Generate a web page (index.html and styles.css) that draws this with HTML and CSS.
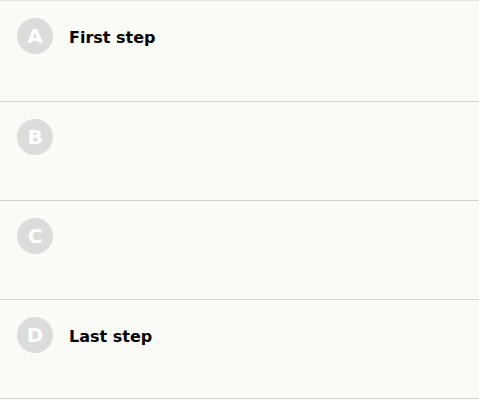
FILE: index.html
```html
<!DOCTYPE html>
<html lang="en">
<head>
  <meta charset="UTF-8" />
  <title>Steps</title>
  <link rel="stylesheet" href="styles.css">
</head>
<body>

<ul class="steps">
  <li class="step step--first">
    <span class="badge">A</span>
    <span class="label">First step</span>
  </li>
  <li class="step">
    <span class="badge">B</span>
    <span class="label"></span>
  </li>
  <li class="step">
    <span class="badge">C</span>
    <span class="label"></span>
  </li>
  <li class="step">
    <span class="badge">D</span>
    <span class="label">Last step</span>
  </li>
</ul>

</body>
</html>
```

FILE: styles.css
```css
body {
  margin: 0;
  background: #fafaf6;
  font-family: "DejaVu Sans", Verdana, sans-serif;
  color: #000;
}
.steps {
  list-style: none;
  margin: 0;
  padding: 0;
  border-top: 1px solid #e6e6e2;
}
.step {
  display: flex;
  align-items: flex-start;
  gap: 16px;
  height: 99px;
  padding: 17px 17px 0 17px;
  box-sizing: border-box;
  border-bottom: 1px solid #d3d3cf;
}
.step--first {
  height: 101px;
}
.badge {
  flex: none;
  width: 36px;
  height: 36px;
  border-radius: 50%;
  background: #dcdcda;
  color: #fff;
  font-weight: bold;
  font-size: 20px;
  display: flex;
  align-items: center;
  justify-content: center;
}
.label {
  margin-top: 2px;
  font-weight: bold;
  font-size: 16px;
  line-height: 36px;
}
```
